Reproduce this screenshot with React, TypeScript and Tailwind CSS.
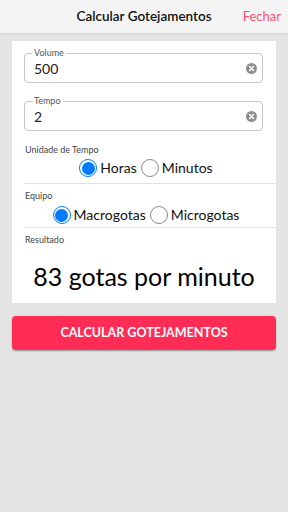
import { useState } from "react";

function ClearIcon() {
  return (
    <svg width="11" height="11" viewBox="0 0 20 20" className="shrink-0">
      <circle cx="10" cy="10" r="10" fill="#8e8e8e" />
      <path d="M6.5 6.5l7 7M13.5 6.5l-7 7" stroke="#fff" strokeWidth="2.6" strokeLinecap="round" />
    </svg>
  );
}

function Field({ label, value }: { label: string; value: string }) {
  return (
    <div className="relative flex h-[30px] items-center rounded-[4px] border border-[#c8c8c8] pl-[9px] pr-[5px]">
      <span className="absolute -top-[6px] left-[7px] bg-white px-[2px] text-[9px] leading-[10px] text-[#555]">
        {label}
      </span>
      <span className="flex-1 text-[14px] text-[#222]">{value}</span>
      <ClearIcon />
    </div>
  );
}

function Radio({ checked, label, onClick }: { checked: boolean; label: string; onClick: () => void }) {
  return (
    <button type="button" onClick={onClick} className="flex items-center gap-[3px]">
      <span
        className={`flex h-[18px] w-[18px] items-center justify-center rounded-full border ${
          checked ? "border-[#007aff]" : "border-[#8a8a8a]"
        }`}
      >
        {checked && <span className="h-[13px] w-[13px] rounded-full bg-[#007aff]" />}
      </span>
      <span className="text-[14px] leading-[18px] text-[#111]">{label}</span>
    </button>
  );
}

export default function App() {
  const [unidade, setUnidade] = useState<"horas" | "minutos">("horas");
  const [equipo, setEquipo] = useState<"macro" | "micro">("macro");

  return (
    <div className="min-h-[512px] bg-[#e4e4e4] font-['Lato',sans-serif]">
      {/* Header */}
      <div className="relative flex h-[34px] items-center justify-center border-b border-[#d6d6d6] bg-[#f4f4f4]">
        <span className="text-[13.5px] font-semibold text-[#111]">Calcular Gotejamentos</span>
        <span className="absolute right-[7px] text-[13px] text-[#ff4f72]">Fechar</span>
      </div>

      <div className="px-3 pt-[7px]">
        {/* Card */}
        <div className="bg-white pt-3">
          <div className="flex flex-col gap-[18px] pl-3 pr-[13px]">
            <Field label="Volume" value="500" />
            <Field label="Tempo" value="2" />
          </div>

          <div className="ml-3 border-b border-[#e2e2e2] pb-[6px] pr-2 pt-[14px]">
            <div className="pl-px text-[9px] leading-[10px] text-[#444]">Unidade de Tempo</div>
            <div className="mt-1 flex justify-center gap-1">
              <Radio checked={unidade === "horas"} label="Horas" onClick={() => setUnidade("horas")} />
              <Radio checked={unidade === "minutos"} label="Minutos" onClick={() => setUnidade("minutos")} />
            </div>
          </div>

          <div className="ml-3 border-b border-[#e2e2e2] pb-[3px] pr-2 pt-[7px]">
            <div className="pl-px text-[9px] leading-[10px] text-[#444]">Equipo</div>
            <div className="mt-[5px] flex justify-center gap-1">
              <Radio checked={equipo === "macro"} label="Macrogotas" onClick={() => setEquipo("macro")} />
              <Radio checked={equipo === "micro"} label="Microgotas" onClick={() => setEquipo("micro")} />
            </div>
          </div>

          <div className="ml-3 pb-[11px] pt-[7px]">
            <div className="pl-px text-[9px] leading-[10px] text-[#444]">Resultado</div>
            <div className="mt-[15px] pr-3 text-center text-[25px] font-normal leading-[32px] text-black">
              83 gotas por minuto
            </div>
          </div>
        </div>

        {/* Button */}
        <button
          type="button"
          className="mt-[13px] flex h-[34px] w-full items-center justify-center rounded-[4px] bg-[#ff2d55] text-[12.5px] font-bold text-white shadow-[0_1px_2px_rgba(0,0,0,0.35)]"
        >
          CALCULAR GOTEJAMENTOS
        </button>
      </div>
    </div>
  );
}
